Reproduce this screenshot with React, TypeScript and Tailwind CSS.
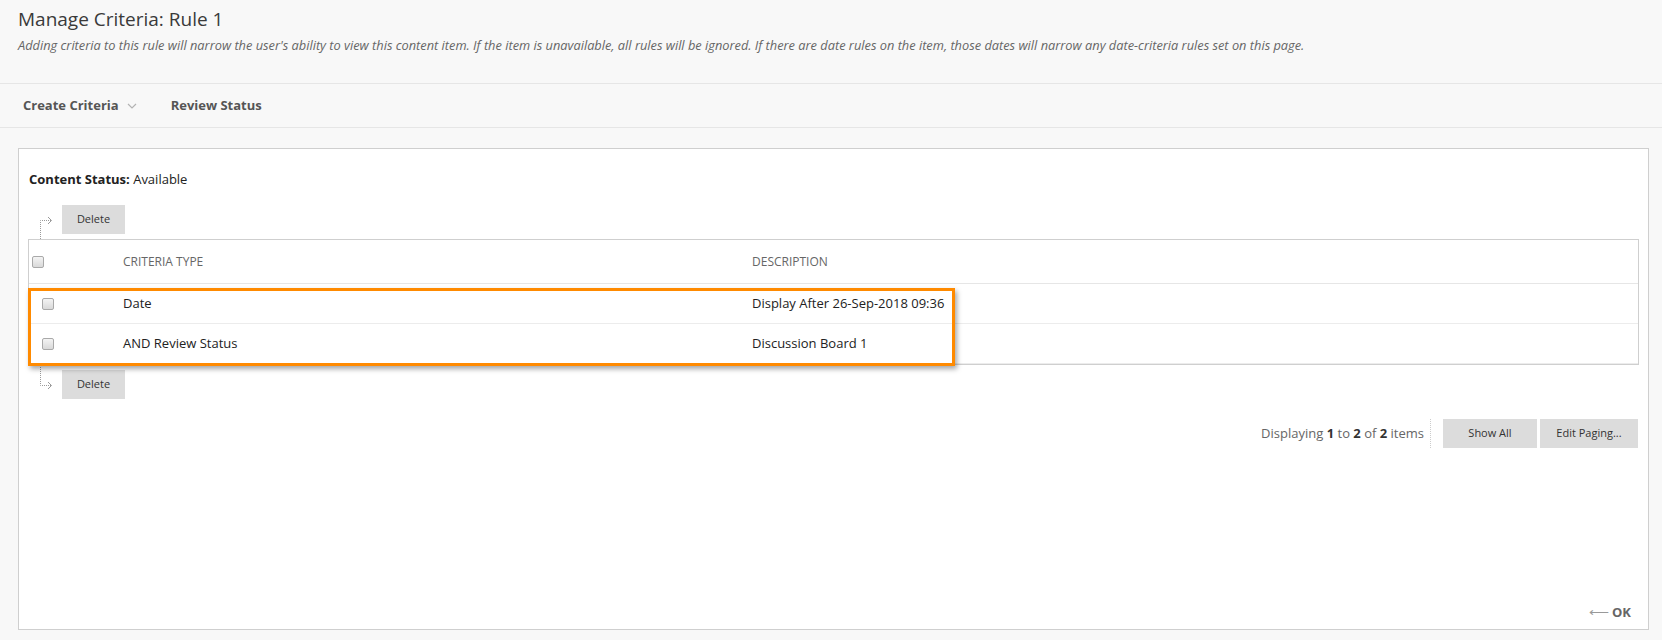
import React from "react";

const font = { fontFamily: '"Open Sans", "Liberation Sans", sans-serif' };

function Checkbox() {
  return (
    <span className="inline-block w-[12px] h-[12px] rounded-[2px] border border-[#a9a9a9] bg-gradient-to-b from-[#f4f4f4] to-[#d9d9d9]" />
  );
}

function ArrowTop() {
  return (
    <svg width="16" height="34" viewBox="0 0 16 34" className="shrink-0">
      <path d="M1.5 34 V15.5 H12" fill="none" stroke="#9a9a9a" strokeWidth="1" strokeDasharray="1 1" />
      <path d="M9 12 L12.5 15.5 L9 19" fill="none" stroke="#9a9a9a" strokeWidth="1" />
    </svg>
  );
}

function ArrowBottom() {
  return (
    <svg width="16" height="34" viewBox="0 0 16 34" className="shrink-0">
      <path d="M1.5 0 V20.5 H12" fill="none" stroke="#9a9a9a" strokeWidth="1" strokeDasharray="1 1" />
      <path d="M9 17 L12.5 20.5 L9 24" fill="none" stroke="#9a9a9a" strokeWidth="1" />
    </svg>
  );
}

function GrayButton({ children, w }: { children: React.ReactNode; w: string }) {
  return (
    <button className={`${w} h-[29px] bg-[#dcdcdc] text-[#333] text-[11px] flex items-center justify-center`}>
      {children}
    </button>
  );
}

export default function App() {
  return (
    <div className="min-h-[640px] bg-[#f8f8f8] text-[#333]" style={font}>
      {/* Header */}
      <div className="px-[18px] pt-[5px] h-[83px]">
        <h1 className="text-[19px] leading-[28px] text-[#3a3a3a] font-normal">Manage Criteria: Rule 1</h1>
        <p className="text-[12.8px] leading-[20px] italic text-[#666] mt-[2px]">
          Adding criteria to this rule will narrow the user's ability to view this content item. If the item is unavailable, all rules will be ignored. If there are date rules on the item, those dates will narrow any date-criteria rules set on this page.
        </p>
      </div>

      {/* Nav bar */}
      <div className="h-[45px] border-t border-b border-[#e6e6e6] flex items-center px-[23px] text-[13px] font-bold text-[#555]">
        <span>Create Criteria</span>
        <svg width="10" height="7" viewBox="0 0 10 7" className="ml-[8px] mt-[1px]">
          <path d="M1 1 L5 5 L9 1" fill="none" stroke="#b3b3b3" strokeWidth="1.2" />
        </svg>
        <span className="ml-[34px]">Review Status</span>
      </div>

      {/* Panel */}
      <div className="ml-[18px] mr-[13px] mt-[20px] h-[482px] bg-white border border-[#cfcfcf] flex flex-col">
        <div className="pl-[10px] pt-[21px] text-[13px] leading-[18px] text-[#222]">
          <span className="font-bold">Content Status:</span> Available
        </div>

        <div className="px-[9px]">
          {/* top actions */}
          <div className="flex mt-[17px] pl-[11px]">
            <ArrowTop />
            <div className="ml-[7px] pb-[5px]">
              <GrayButton w="w-[63px]">Delete</GrayButton>
            </div>
          </div>

          {/* table */}
          <div className="relative border border-[#cfcfcf] text-[13px]">
            <div className="flex items-center h-[44px] border-b border-[#e6e6e6] text-[12px] text-[#666]">
              <div className="w-[94px] pl-[3px] flex items-center"><Checkbox /></div>
              <div className="w-[629px]">CRITERIA TYPE</div>
              <div className="flex-1">DESCRIPTION</div>
            </div>
            <div className="flex items-center h-[40px] border-b border-[#ececec] text-[#222]">
              <div className="w-[94px] pl-[13px] flex items-center"><Checkbox /></div>
              <div className="w-[629px]">Date</div>
              <div className="flex-1">Display After 26-Sep-2018 09:36</div>
            </div>
            <div className="flex items-center h-[40px] border-b border-[#ececec] text-[#222]">
              <div className="w-[94px] pl-[13px] flex items-center"><Checkbox /></div>
              <div className="w-[629px]">AND Review Status</div>
              <div className="flex-1">Discussion Board 1</div>
            </div>
            <div className="absolute left-[-1px] top-[48px] w-[927px] h-[78px] border-[3px] border-[#ff8a00] shadow-[2px_3px_5px_rgba(0,0,0,0.35)] pointer-events-none" />
          </div>

          {/* bottom actions */}
          <div className="flex pl-[11px]">
            <ArrowBottom />
            <div className="ml-[7px] mt-[5px]">
              <GrayButton w="w-[63px]">Delete</GrayButton>
            </div>
          </div>

          {/* paging */}
          <div className="flex justify-end items-center mt-[20px] pr-[1px]">
            <span className="text-[13px] text-[#666]">
              Displaying <b className="text-[#333]">1</b> to <b className="text-[#333]">2</b> of <b className="text-[#333]">2</b> items
            </span>
            <span className="ml-[6px] h-[29px] border-l border-dotted border-[#ccc]" />
            <div className="ml-[12px]">
              <GrayButton w="w-[94px]">Show All</GrayButton>
            </div>
            <div className="ml-[3px]">
              <GrayButton w="w-[98px]">Edit Paging...</GrayButton>
            </div>
          </div>
        </div>

        <div className="mt-auto flex justify-end items-center pr-[17px] pb-[7px] text-[#666]">
          <span className="text-[14px] text-[#999] mr-[3px] leading-none">⟵</span>
          <span className="text-[13px] font-bold">OK</span>
        </div>
      </div>
    </div>
  );
}
